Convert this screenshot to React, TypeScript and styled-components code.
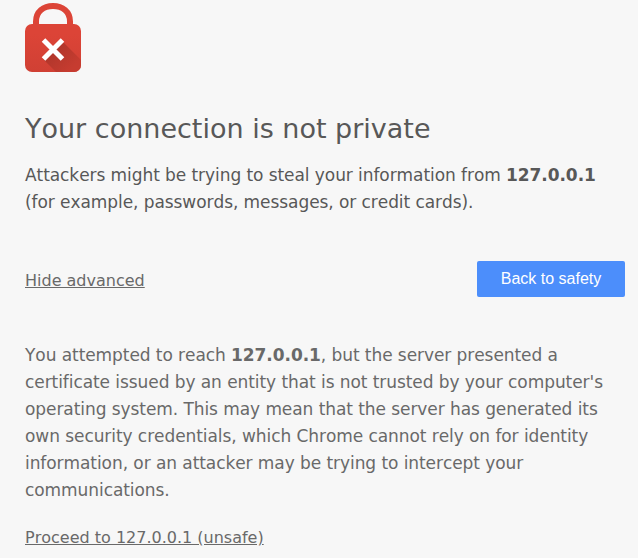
import React from "react";
import styled, { createGlobalStyle } from "styled-components";

const GlobalStyle = createGlobalStyle`
  html, body { margin: 0; background: #f7f7f7; }
  body { font-family: "DejaVu Sans", sans-serif; font-kerning: none; color: #585858; overflow: hidden; }
`;

const Page = styled.main`
  box-sizing: border-box;
  width: 638px;
  height: 558px;
  padding: 2px 13px 0 25px;
  background: #f7f7f7;
  overflow: hidden;
`;

const Lock = styled.svg`
  display: block;
  width: 56px;
  height: 71px;
`;

const Title = styled.h1`
  margin: 40px 0 0;
  font-size: 27px;
  font-weight: 400;
  line-height: 32px;
  white-space: nowrap;
`;

const Paragraph = styled.p<{ $top: number; $muted?: boolean }>`
  margin: ${(p) => p.$top}px 0 0;
  font-size: 17px;
  line-height: 27px;
  letter-spacing: -0.07px;
  white-space: nowrap;
  color: ${(p) => (p.$muted ? "#696969" : "#585858")};
`;

const Actions = styled.div`
  display: flex;
  justify-content: space-between;
  align-items: flex-start;
  height: 36px;
  margin-top: 45px;
`;

const TextLink = styled.a`
  font-size: 16px;
  line-height: 20px;
  color: #696969;
  text-decoration: underline;
`;

const AdvancedLink = styled(TextLink)`
  margin-top: 10px;
`;

const ProceedRow = styled.div`
  display: flex;
  margin-top: 24px;
`;

const SafetyButton = styled.button`
  width: 148px;
  height: 36px;
  padding: 0;
  border: 0;
  border-radius: 2px;
  background: #4c8efb;
  color: #fff;
  font: 16px "Liberation Sans", Arial, sans-serif;
`;

export default function App() {
  return (
    <>
      <GlobalStyle />
      <Page>
        <Lock viewBox="0 0 56 71" aria-hidden="true">
          <defs>
            <linearGradient id="body" x1="0" y1="0" x2="0" y2="1">
              <stop offset="0.2" stopColor="#dc4437" />
              <stop offset="1" stopColor="#d04034" />
            </linearGradient>
            <linearGradient id="shade" gradientUnits="userSpaceOnUse" x1="28" y1="47" x2="47" y2="66">
              <stop offset="0" stopColor="#b0362b" />
              <stop offset="1" stopColor="#c63c30" />
            </linearGradient>
          </defs>
          <path d="M11 24V19.5C11 9.5 18.5 4 28 4S45 9.5 45 19.5V24" fill="none" stroke="#dc4437" strokeWidth="6" />
          <rect y="22" width="56" height="48" rx="7" fill="url(#body)" />
          <path d="M38 40L56 58v5a7 7 0 0 1-7 7H31L18 57z" fill="url(#shade)" />
          <path d="M18.5 38L37.5 57M37.5 38L18.5 57" stroke="#fff" strokeWidth="5" />
        </Lock>
        <Title>Your connection is not private</Title>
        <Paragraph $top={17}>
          Attackers might be trying to steal your information from <b>127.0.0.1</b>
          <br />
          (for example, passwords, messages, or credit cards).
        </Paragraph>
        <Actions>
          <AdvancedLink>Hide advanced</AdvancedLink>
          <SafetyButton>Back to safety</SafetyButton>
        </Actions>
        <Paragraph $top={45} $muted>
          You attempted to reach <b>127.0.0.1</b>, but the server presented a
          <br />
          certificate issued by an entity that is not trusted by your computer's
          <br />
          operating system. This may mean that the server has generated its
          <br />
          own security credentials, which Chrome cannot rely on for identity
          <br />
          information, or an attacker may be trying to intercept your
          <br />
          communications.
        </Paragraph>
        <ProceedRow>
          <TextLink>Proceed to 127.0.0.1 (unsafe)</TextLink>
        </ProceedRow>
      </Page>
    </>
  );
}
